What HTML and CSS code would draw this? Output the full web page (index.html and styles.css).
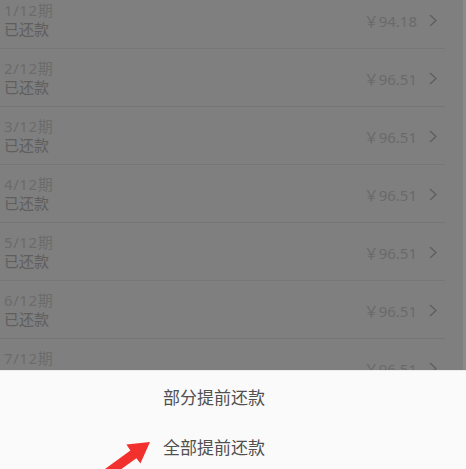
FILE: index.html
```html
<!DOCTYPE html>
<html lang="zh-CN">
  <head>
    <meta charset="UTF-8" />
    <title>还款计划</title>
    <link rel="stylesheet" href="styles.css">
  </head>
  <body>
    <div class="page">
      <div class="plan-list">
        <div class="plan-item">
          <div class="plan-info">
            <div class="plan-term">1/12期</div>
            <div class="plan-status">已还款</div>
          </div>
          <div class="plan-amount">￥94.18</div>
          <svg class="chevron" width="8" height="13" viewBox="0 0 8 13"><polyline points="1,1 7,6.5 1,12" /></svg>
        </div>
        <div class="plan-item">
          <div class="plan-info">
            <div class="plan-term">2/12期</div>
            <div class="plan-status">已还款</div>
          </div>
          <div class="plan-amount">￥96.51</div>
          <svg class="chevron" width="8" height="13" viewBox="0 0 8 13"><polyline points="1,1 7,6.5 1,12" /></svg>
        </div>
        <div class="plan-item">
          <div class="plan-info">
            <div class="plan-term">3/12期</div>
            <div class="plan-status">已还款</div>
          </div>
          <div class="plan-amount">￥96.51</div>
          <svg class="chevron" width="8" height="13" viewBox="0 0 8 13"><polyline points="1,1 7,6.5 1,12" /></svg>
        </div>
        <div class="plan-item">
          <div class="plan-info">
            <div class="plan-term">4/12期</div>
            <div class="plan-status">已还款</div>
          </div>
          <div class="plan-amount">￥96.51</div>
          <svg class="chevron" width="8" height="13" viewBox="0 0 8 13"><polyline points="1,1 7,6.5 1,12" /></svg>
        </div>
        <div class="plan-item">
          <div class="plan-info">
            <div class="plan-term">5/12期</div>
            <div class="plan-status">已还款</div>
          </div>
          <div class="plan-amount">￥96.51</div>
          <svg class="chevron" width="8" height="13" viewBox="0 0 8 13"><polyline points="1,1 7,6.5 1,12" /></svg>
        </div>
        <div class="plan-item">
          <div class="plan-info">
            <div class="plan-term">6/12期</div>
            <div class="plan-status">已还款</div>
          </div>
          <div class="plan-amount">￥96.51</div>
          <svg class="chevron" width="8" height="13" viewBox="0 0 8 13"><polyline points="1,1 7,6.5 1,12" /></svg>
        </div>
        <div class="plan-item">
          <div class="plan-info">
            <div class="plan-term">7/12期</div>
            <div class="plan-status">已还款</div>
          </div>
          <div class="plan-amount">￥96.51</div>
          <svg class="chevron" width="8" height="13" viewBox="0 0 8 13"><polyline points="1,1 7,6.5 1,12" /></svg>
        </div>
      </div>
      <div class="scroll-strip"></div>
    </div>

    <div class="action-sheet">
      <div class="sheet-item">部分提前还款</div>
      <div class="sheet-item">全部提前还款</div>
    </div>

    <svg class="arrow" width="466" height="469" viewBox="0 0 466 469">
      <polygon
        fill="#f2312e"
        points="150,442 126.4,444.6 130.4,450.6 97.5,474.4 103.2,482.1 136.4,458.2 140.4,463.4"
      />
    </svg>
  </body>
</html>
```

FILE: styles.css
```css
body {
  margin: 0;
  font-family: "Noto Sans", "Noto Sans CJK SC", sans-serif;
  background: #7f7f7f;
  overflow: hidden;
  height: 469px;
}

.page {
  display: flex;
  height: 469px;
  overflow: hidden;
}

.plan-list {
  width: 445px;
  margin-top: -9px;
}

.scroll-strip {
  margin-left: 18px;
  width: 3px;
  background: #8a8a8a;
}

.plan-item {
  display: flex;
  align-items: center;
  padding: 10px 8px 9px 4px;
  border-bottom: 1px solid #767676;
}

.plan-info {
  flex: 1;
}

.plan-term {
  font-size: 15px;
  line-height: 19px;
  letter-spacing: 0.6px;
  color: #6b6b6b;
}

.plan-status {
  font-size: 15px;
  line-height: 19px;
  color: #5e5e5e;
}

.plan-amount {
  font-size: 15px;
  color: #6a6a6a;
}

.chevron {
  margin-left: 12px;
  fill: none;
  stroke: #5f5f5f;
  stroke-width: 1.4;
}

.action-sheet {
  position: absolute;
  left: 0;
  right: 0;
  top: 370px;
  bottom: 0;
  background: #fafafa;
  border-top: 1px solid #ececec;
}

.sheet-item {
  height: 50px;
  display: flex;
  align-items: center;
  padding-left: 163px;
  font-family: "Noto Sans CJK SC", sans-serif;
  font-size: 17px;
  color: #505050;
}

.arrow {
  position: absolute;
  left: 0;
  top: 0;
  pointer-events: none;
}
```
